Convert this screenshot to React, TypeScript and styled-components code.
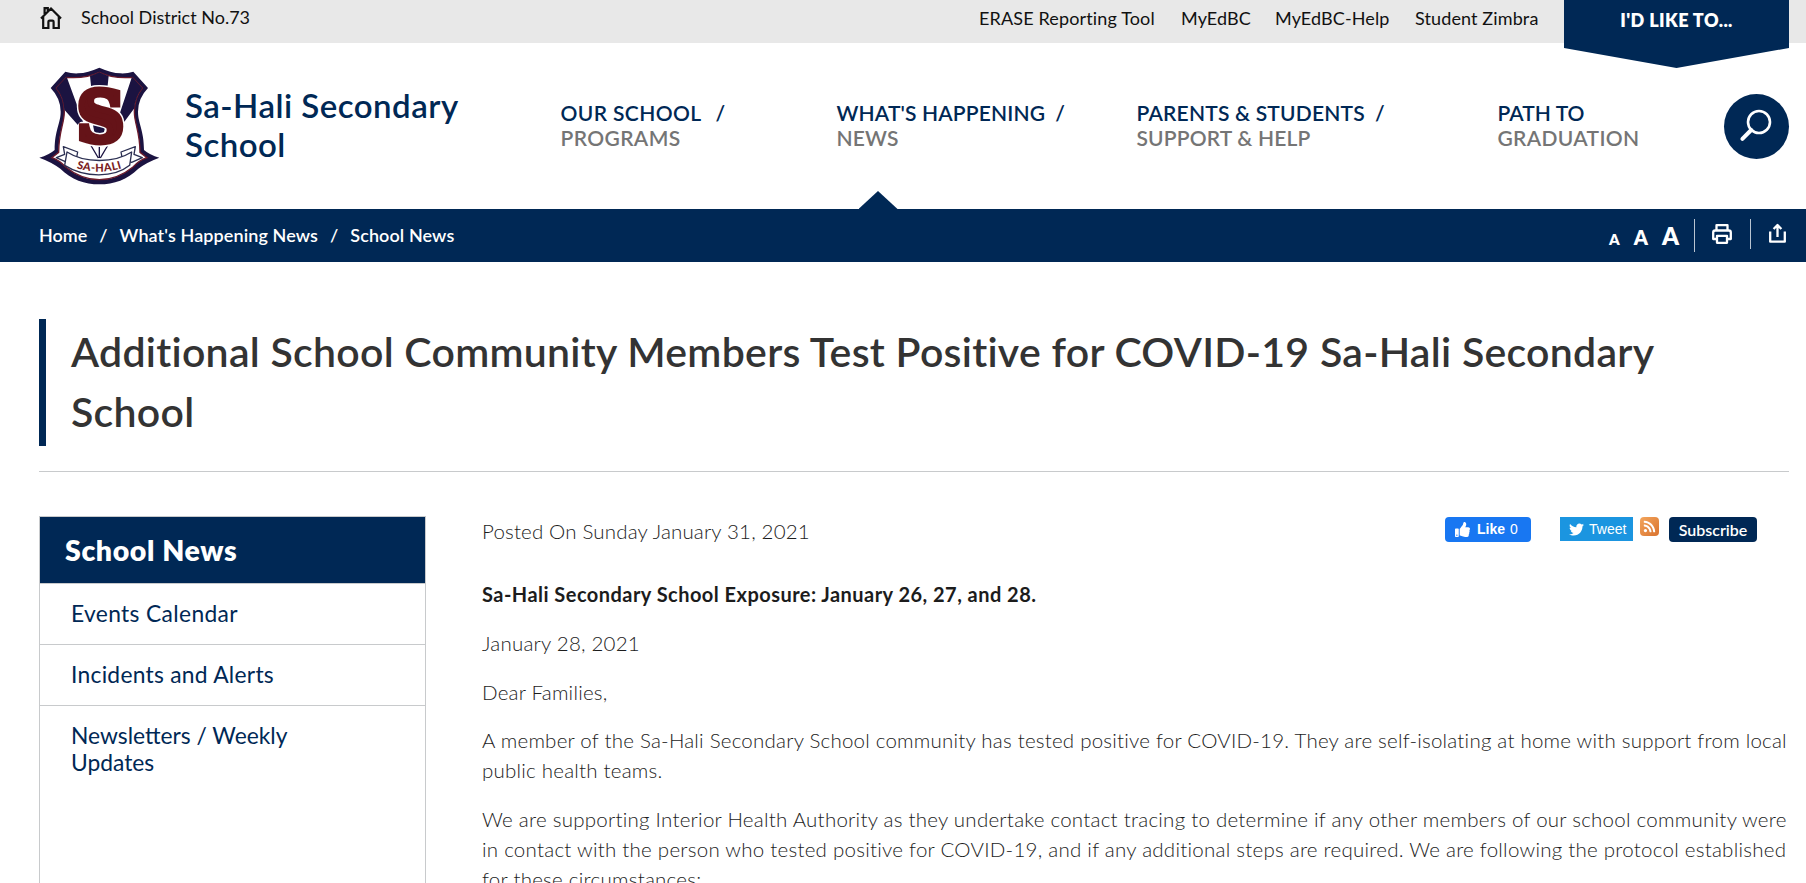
import React from 'react';
import styled, { createGlobalStyle } from 'styled-components';
import { FaThumbsUp, FaTwitter, FaRss } from 'react-icons/fa';

const NAVY = '#002855';
const RULE = '#c8cacc';

const GlobalStyle = createGlobalStyle`
  *, *::before, *::after { box-sizing: border-box; }
  html, body { margin: 0; height: 883px; overflow: hidden; background: #fff; }
  body { font-family: Lato, "Open Sans", sans-serif; color: #333; }
  a { color: inherit; text-decoration: none; }
  svg { display: block; flex: none; }
`;

const Page = styled.div`
  width: 1806px;
  height: 883px;
  overflow: hidden;
`;

/* ---------- top strip ---------- */

const TopBar = styled.div`
  display: flex;
  justify-content: space-between;
  height: 43px;
  padding: 0 17px 0 40px;
  background: #e8e8e8;
  color: #111;
  font-size: 18px;
`;

const District = styled.a`
  display: flex;
  gap: 19px;
  height: 34px;
  line-height: 35px;

  svg { margin-top: 6px; }
`;

const TopLinks = styled.nav`
  display: flex;
  line-height: 37px;
`;

const TopLink = styled.a<{ $width: number; $spacing: number }>`
  width: ${p => p.$width}px;
  letter-spacing: ${p => p.$spacing}px;
  white-space: nowrap;
`;

const Ribbon = styled.a`
  width: 225px;
  height: 68px;
  background: ${NAVY};
  clip-path: polygon(0 0, 100% 0, 100% 48px, 50% 100%, 0 48px);
  color: #fff;
  font-weight: 800;
  line-height: 40px;
  letter-spacing: 0.4px;
  text-align: center;
`;

/* ---------- header ---------- */

const Header = styled.header`
  display: flex;
  align-items: flex-start;
  height: 166px;
  padding: 0 17px 0 39px;
`;

const CrestLink = styled.a`
  margin: 24px 25px 0 0;
`;

const SchoolName = styled.a`
  width: 376px;
  margin-top: 43px;
  color: ${NAVY};
  font-size: 33px;
  font-weight: 600;
  line-height: 39px;
  letter-spacing: 0.48px;
`;

const MainNav = styled.nav`
  display: flex;
  flex: 1;
  height: 100%;
`;

const NavItem = styled.a<{ $width: number }>`
  position: relative;
  left: -0.5px;
  width: ${p => p.$width}px;
  padding-top: 57px;
  font-size: 21px;
  font-weight: 600;
  line-height: 25px;
  white-space: nowrap;
`;

const NavTop = styled.span<{ $spacing: number }>`
  display: block;
  color: ${NAVY};
  letter-spacing: ${p => p.$spacing}px;
`;

const NavSlash = styled.span<{ $gap: number }>`
  margin-left: ${p => p.$gap}px;
`;

const NavBottom = styled.span<{ $spacing: number }>`
  display: block;
  color: #757575;
  letter-spacing: ${p => p.$spacing}px;
`;

const ActiveMarker = styled.span`
  position: absolute;
  left: 22px;
  bottom: 0;
  width: 39px;
  height: 18px;
  background: ${NAVY};
  clip-path: polygon(50% 0, 100% 100%, 0 100%);
`;

const SearchButton = styled.button`
  display: grid;
  place-items: center;
  width: 65px;
  height: 65px;
  margin-top: 51px;
  padding: 0 2px 2px 0;
  border: 0;
  border-radius: 50%;
  background: ${NAVY};
`;

/* ---------- breadcrumb bar ---------- */

const CrumbBar = styled.div`
  display: flex;
  justify-content: space-between;
  height: 53px;
  padding: 0 20px 0 39px;
  background: ${NAVY};
  color: #fff;
`;

const Crumbs = styled.nav`
  display: flex;
  gap: 12px;
  font-size: 18px;
  font-weight: 600;
  line-height: 52px;
`;

const Crumb = styled.a<{ $spacing: number }>`
  letter-spacing: ${p => p.$spacing}px;
`;

const Tools = styled.div`
  display: flex;
  height: 49px;
`;

const SizeButtons = styled.div`
  display: flex;
  align-items: baseline;
  gap: 14px;
  padding: 10px 15px 0 0;
  font-weight: 800;
`;

const SizeButton = styled.a<{ $size: number }>`
  font-size: ${p => p.$size}px;
  line-height: 34px;
`;

const Tool = styled.a<{ $height: number; $padding: string }>`
  height: ${p => p.$height}px;
  margin-top: 10px;
  padding: ${p => p.$padding};
  border-left: 1px solid #b9c4d1;
`;

/* ---------- page title ---------- */

const TitleBlock = styled.div`
  margin: 57px 17px 0 39px;
  padding-bottom: 25px;
  border-bottom: 1px solid ${RULE};
`;

const Title = styled.h1`
  height: 127px;
  margin: 0;
  padding: 3px 90px 0 25px;
  border-left: 7px solid ${NAVY};
  font-size: 41px;
  font-weight: 600;
  line-height: 60px;
  letter-spacing: 0.28px;
`;

/* ---------- main columns ---------- */

const Columns = styled.div`
  display: flex;
  align-items: flex-start;
  gap: 56px;
  padding: 44px 17px 0 39px;
`;

const Sidebar = styled.aside`
  width: 387px;
  height: 420px;
  flex: none;
  border: 1px solid ${RULE};
`;

const SidebarTitle = styled.h2`
  height: 67px;
  margin: 0;
  padding-left: 25px;
  border-bottom: 1px solid ${RULE};
  background: ${NAVY};
  color: #fff;
  font-size: 28.5px;
  font-weight: 800;
  line-height: 67px;
  letter-spacing: 0.6px;
`;

const SidebarLink = styled.a<{ $spacing: number }>`
  display: block;
  padding: 16px 90px 17px 31px;
  color: ${NAVY};
  font-size: 22.8px;
  line-height: 27px;
  letter-spacing: ${p => p.$spacing}px;

  & + & { border-top: 1px solid ${RULE}; }
`;

const Article = styled.main`
  flex: 1;
  color: #1c1c1c;
  font-size: 20.5px;
  font-weight: 300;
  line-height: 30px;
`;

const MetaRow = styled.div`
  display: flex;
  justify-content: space-between;
  height: 63px;
  padding-right: 32px;
`;

const Posted = styled.span`
  letter-spacing: 0.17px;
`;

const Share = styled.div`
  display: flex;
  align-items: flex-start;
  padding-top: 1px;
`;

const LikeButton = styled.a`
  display: flex;
  align-items: center;
  width: 86px;
  height: 25px;
  margin-right: 29px;
  padding-left: 10px;
  border-radius: 4px;
  background: #1877f2;
  color: #fff;
  font: 700 14px/25px "Liberation Sans", sans-serif;

  svg { margin-right: 7px; }
  span { margin-left: 5px; font-weight: 400; }
`;

const TweetButton = styled.a`
  display: flex;
  align-items: center;
  width: 73px;
  height: 24px;
  margin-right: 7px;
  padding-left: 9px;
  background: #1b95e0;
  color: #fff;
  font: 400 14px/24px "Liberation Sans", sans-serif;

  svg { margin-right: 5px; }
`;

const RssBadge = styled.a`
  display: grid;
  place-items: center;
  width: 19px;
  height: 19px;
  margin-right: 10px;
  border-radius: 4px;
  background: linear-gradient(135deg, #f3a55c, #d9732f);
  color: #fff;
`;

const SubscribeButton = styled.a`
  width: 88px;
  height: 25px;
  border-radius: 4px;
  background: ${NAVY};
  color: #fff;
  font-size: 16px;
  font-weight: 600;
  line-height: 25px;
  text-align: center;
`;

const Paragraph = styled.p<{ $bold?: boolean; $spacing?: number }>`
  margin: 0 0 18.8px;
  font-size: ${p => (p.$bold ? 20 : 20.5)}px;
  font-weight: ${p => (p.$bold ? 700 : 300)};
  letter-spacing: ${p => p.$spacing ?? 0.22}px;
  white-space: nowrap;
`;

/* ---------- drawings ---------- */

const HomeIcon = () => (
  <svg width="22" height="24" viewBox="0 0 22 24" fill="none" stroke="#111" strokeWidth="2.2">
    <path d="M1 12.5 11 2.5 21 12.5M3.2 11v11h5.2v-6.2q0-1.2 1.2-1.2h2.8q1.2 0 1.2 1.2V22h5.2V11M4.6 9V2.2h3.2v3" />
  </svg>
);

const SearchIcon = () => (
  <svg width="34" height="34" viewBox="0 0 34 34" fill="none" stroke="#fff">
    <circle cx="20" cy="13" r="11" strokeWidth="2.6" />
    <path d="M12.2 21 3.4 29.8" strokeWidth="4" strokeLinecap="round" />
  </svg>
);

const PrintIcon = () => (
  <svg width="20" height="20" viewBox="0 0 20 20" fill="none" stroke="#fff" strokeWidth="2.3" strokeLinejoin="round">
    <path d="M4.5 6.5V1.2h11v5.3M4.5 15H1.2V8.5q0-2 2-2h13.6q2 0 2 2V15h-3.3" />
    <path d="M5 11.8h10v7H5z" />
  </svg>
);

const ShareIcon = () => (
  <svg width="17" height="20" viewBox="0 0 17 20" fill="none" stroke="#fff" strokeWidth="2.3" strokeLinejoin="round">
    <path d="M1.2 8.5v10.2h14.6V8.5M8.5 14V3M4.6 6 8.5 2l3.9 4" />
  </svg>
);

const Crest = () => (
  <svg width="121" height="118" viewBox="28 36 363 354">
    <path
      fill="#1b1341"
      d="M209 38C186 48 165 55 145 55Q126 56 107 50L63 99Q93 130 93 170C93 205 75 225 75 285Q58 300 29 308Q65 321 92 341C125 374 165 388 209 388S293 374 326 341Q353 321 389 308Q360 300 343 285C343 225 325 205 325 170Q325 130 355 99L311 50Q292 56 273 55C253 55 232 48 209 38Z"
    />
    <path
      fill="#fff"
      stroke="#6b1a2b"
      strokeWidth="4"
      d="M209 52C180 66 150 70 110 67L80 99Q104 128 104 170C104 205 87 230 87 292L66 308Q90 316 108 336C140 362 170 374 209 374S278 362 310 336Q328 316 352 308L331 292C331 230 314 205 314 170Q314 128 338 99L308 67C268 70 238 66 209 52Z"
    />
    <path fill="#1b1341" d="M110 67 80 99Q102 125 104 164L150 216 166 216 112 68ZM308 67 338 99Q316 125 314 160L284 200 262 200 306 68Z" />
    <path fill="#1b1341" d="M181 63Q197 58 209 52Q221 58 237 63L230 130H188ZM188 200H230L216 262H200Z" />
    <path fill="none" stroke="#1b1341" strokeWidth="4" d="M183 270 206 309M209 270V309M235 270 212 309" />
    <g transform="translate(213 259) scale(.94 1)">
      <text
        textAnchor="middle"
        fontFamily="DejaVu Serif"
        fontWeight="700"
        fontSize="206"
        fill="#651318"
        stroke="#fff"
        strokeWidth="30"
        strokeLinejoin="round"
        paintOrder="stroke"
      >
        S
      </text>
      <text textAnchor="middle" fontFamily="DejaVu Serif" fontWeight="700" fontSize="206" fill="#651318" stroke="#651318" strokeWidth="21">
        S
      </text>
    </g>
    <g fill="#fff" stroke="#2b2f52" strokeWidth="4" strokeLinejoin="round">
      <path d="M101 275 144 291 140 312 112 322 80 308 105 298ZM317 275 274 291 278 312 306 322 338 308 313 298Z" />
      <path d="M112 291C165 325 253 325 306 291L300 331C253 369 165 369 105 331Z" />
    </g>
    <path id="motto" fill="none" d="M122 333Q209 367 296 333" />
    <text fontFamily="Lato" fontWeight="900" fontSize="33" fill="#7a1c22" textAnchor="middle" letterSpacing="1.5">
      <textPath href="#motto" startOffset="50%">SA-HALI</textPath>
    </text>
  </svg>
);

/* ---------- data ---------- */

const topLinks = [
  { label: 'ERASE Reporting Tool', width: 202, spacing: 0.14 },
  { label: 'MyEdBC', width: 94, spacing: 0.13 },
  { label: 'MyEdBC-Help', width: 140, spacing: 0.12 },
  { label: 'Student Zimbra', width: 149, spacing: 0.12 },
];

const navItems = [
  { top: 'OUR SCHOOL', bottom: 'PROGRAMS', width: 276, topSpacing: 0.38, bottomSpacing: 0.37, slashGap: 14 },
  { top: "WHAT'S HAPPENING", bottom: 'NEWS', width: 300, topSpacing: 0.14, bottomSpacing: 0.2, slashGap: 10, active: true },
  { top: 'PARENTS & STUDENTS', bottom: 'SUPPORT & HELP', width: 361, topSpacing: 0.2, bottomSpacing: 0.16, slashGap: 10 },
  { top: 'PATH TO', bottom: 'GRADUATION', width: 200, topSpacing: 0.04, bottomSpacing: 0.33 },
];

const sidebarLinks = [
  { label: 'Events Calendar', spacing: 0.35 },
  { label: 'Incidents and Alerts', spacing: 0.27 },
  { label: 'Newsletters / Weekly Updates', spacing: 0 },
];

export default function App() {
  return (
    <Page>
      <GlobalStyle />
      <TopBar>
        <District href="#">
          <HomeIcon />
          School District No.73
        </District>
        <TopLinks>
          {topLinks.map(l => (
            <TopLink key={l.label} href="#" $width={l.width} $spacing={l.spacing}>
              {l.label}
            </TopLink>
          ))}
          <Ribbon href="#">I'D LIKE TO...</Ribbon>
        </TopLinks>
      </TopBar>

      <Header>
        <CrestLink href="#">
          <Crest />
        </CrestLink>
        <SchoolName href="#">
          Sa-Hali Secondary
          <br />
          School
        </SchoolName>
        <MainNav>
          {navItems.map(n => (
            <NavItem key={n.top} href="#" $width={n.width}>
              <NavTop $spacing={n.topSpacing}>
                {n.top}
                {n.slashGap && <NavSlash $gap={n.slashGap}>/</NavSlash>}
              </NavTop>
              <NavBottom $spacing={n.bottomSpacing}>{n.bottom}</NavBottom>
              {n.active && <ActiveMarker />}
            </NavItem>
          ))}
        </MainNav>
        <SearchButton aria-label="Search">
          <SearchIcon />
        </SearchButton>
      </Header>

      <CrumbBar>
        <Crumbs>
          <Crumb href="#" $spacing={0}>Home</Crumb>
          <span>/</span>
          <Crumb href="#" $spacing={0.1}>What's Happening News</Crumb>
          <span>/</span>
          <Crumb href="#" $spacing={0.1}>School News</Crumb>
        </Crumbs>
        <Tools>
          <SizeButtons>
            <SizeButton $size={15}>A</SizeButton>
            <SizeButton $size={20}>A</SizeButton>
            <SizeButton $size={24}>A</SizeButton>
          </SizeButtons>
          <Tool $height={33} $padding="5px 18px 0 17px">
            <PrintIcon />
          </Tool>
          <Tool $height={30} $padding="4px 0 0 18px">
            <ShareIcon />
          </Tool>
        </Tools>
      </CrumbBar>

      <TitleBlock>
        <Title>Additional School Community Members Test Positive for COVID-19 Sa-Hali Secondary School</Title>
      </TitleBlock>

      <Columns>
        <Sidebar>
          <SidebarTitle>School News</SidebarTitle>
          {sidebarLinks.map(l => (
            <SidebarLink key={l.label} href="#" $spacing={l.spacing}>
              {l.label}
            </SidebarLink>
          ))}
        </Sidebar>
        <Article>
          <MetaRow>
            <Posted>Posted On Sunday January 31, 2021</Posted>
            <Share>
              <LikeButton href="#">
                <FaThumbsUp size={15} />
                Like<span>0</span>
              </LikeButton>
              <TweetButton href="#">
                <FaTwitter size={15} />
                Tweet
              </TweetButton>
              <RssBadge href="#">
                <FaRss size={13} />
              </RssBadge>
              <SubscribeButton href="#">Subscribe</SubscribeButton>
            </Share>
          </MetaRow>
          <Paragraph $bold $spacing={0.46}>
            Sa-Hali Secondary School Exposure: January 26, 27, and 28.
          </Paragraph>
          <Paragraph>January 28, 2021</Paragraph>
          <Paragraph>Dear Families,</Paragraph>
          <Paragraph>
            A member of the Sa-Hali Secondary School community has tested positive for COVID-19. They are self-isolating at home with support from local
            <br />
            public health teams.
          </Paragraph>
          <Paragraph $spacing={0.25}>
            We are supporting Interior Health Authority as they undertake contact tracing to determine if any other members of our school community were
            <br />
            in contact with the person who tested positive for COVID-19, and if any additional steps are required. We are following the protocol established
            <br />
            for these circumstances:
          </Paragraph>
        </Article>
      </Columns>
    </Page>
  );
}
